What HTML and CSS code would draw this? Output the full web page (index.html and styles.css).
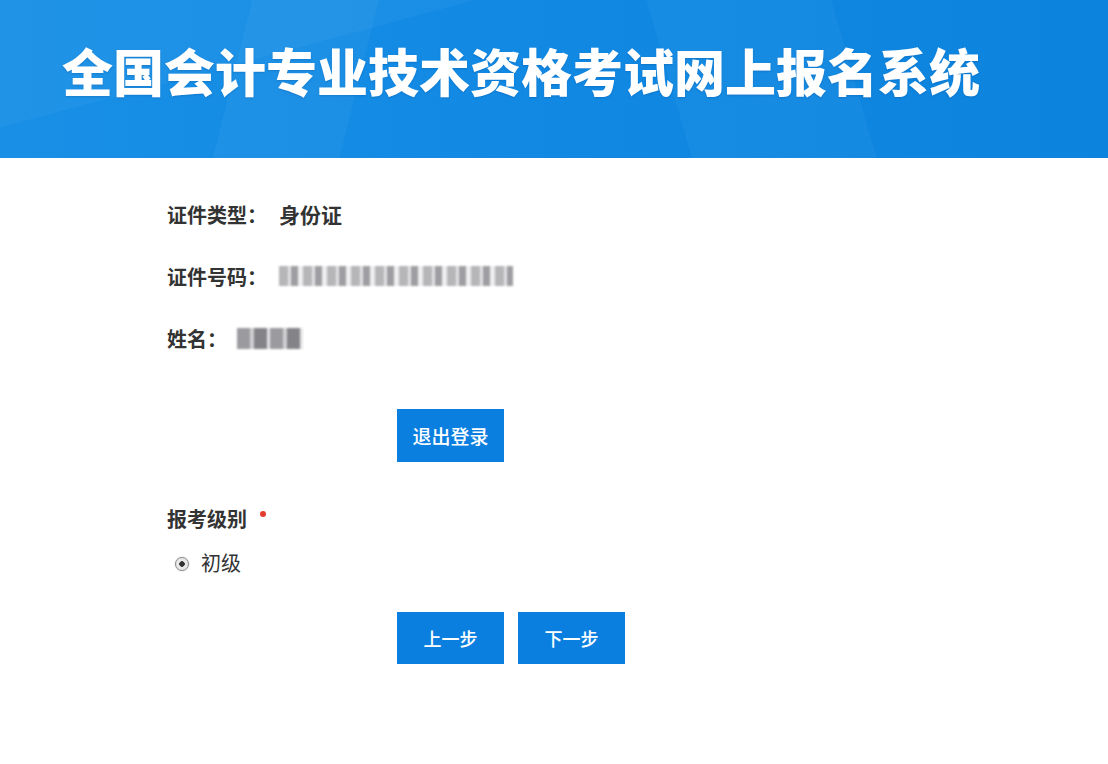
FILE: index.html
```html
<!DOCTYPE html>
<html lang="zh-CN">

<head>
    <meta charset="UTF-8">
    <meta name="viewport" content="width=device-width, initial-scale=1.0">
    <title>全国会计专业技术资格考试网上报名系统</title>
    <link rel="stylesheet" href="styles.css">
</head>

<body>
    <!-- top banner -->
    <header class="banner">
        <h1 class="banner-title">全国会计专业技术资格考试网上报名系统</h1>
    </header>

    <main class="panel">
        <div class="info-row">
            <span class="label">证件类型：</span>
            <span class="value">身份证</span>
        </div>
        <div class="info-row">
            <span class="label">证件号码：</span>
            <span class="masked masked-id"></span>
        </div>
        <div class="info-row">
            <span class="label">姓名：</span>
            <span class="masked masked-name"></span>
        </div>

        <div class="actions actions-logout">
            <button class="btn">退出登录</button>
        </div>

        <div class="field-title">报考级别<span class="required"></span></div>
        <label class="radio">
            <span class="radio-dot"></span>
            <span>初级</span>
        </label>

        <div class="actions actions-steps">
            <button class="btn">上一步</button>
            <button class="btn">下一步</button>
        </div>
    </main>
</body>

</html>
```

FILE: styles.css
```css
* {
    box-sizing: border-box;
}

body {
    margin: 0;
    background-color: #fdfdfe;
    font-family: "Noto Sans CJK SC", "Noto Sans", sans-serif;
    color: #333;
}

/* banner */
.banner {
    height: 158px;
    padding-left: 62px;
    display: flex;
    align-items: center;
    background:
        linear-gradient(104deg, transparent 0 22%, rgba(255, 255, 255, 0.035) 22% 33%, transparent 33%),
        linear-gradient(74deg, transparent 0 60%, rgba(255, 255, 255, 0.03) 60% 76%, transparent 76%),
        linear-gradient(165deg, rgba(255, 255, 255, 0.03) 0 28%, transparent 28%),
        linear-gradient(90deg, #1990e6 0%, #1189e3 50%, #0c84de 100%);
}

.banner-title {
    margin: 0 0 18px;
    font-size: 51px;
    line-height: 60px;
    font-weight: 900;
    color: #fff;
    letter-spacing: 0;
    text-shadow: 0 1px 2px rgba(0, 60, 130, 0.25);
}

/* form area */
.panel {
    padding: 44px 0 0 167px;
    background-color: #fff;
    min-height: 606px;
}

.info-row {
    display: flex;
    align-items: center;
    gap: 12px;
    height: 24px;
    margin-bottom: 38px;
    font-size: 20px;
    font-weight: 700;
    color: #333;
}

.info-row .value {
    font-size: 21px;
}

.info-row:nth-child(3) {
    margin-bottom: 0;
}

.masked {
    display: inline-block;
    height: 20px;
    filter: blur(1px);
}

.masked-id {
    width: 234px;
    background:
        repeating-linear-gradient(90deg, #a4a4a8 0 9px, #dcdcde 9px 12px, #86868b 12px 19px, #ebebed 19px 24px);
    opacity: 0.8;
}

.masked-name {
    width: 66px;
    height: 21px;
    margin-left: -2px;
    background:
        repeating-linear-gradient(90deg, #8a8a8f 0 13px, #c9c9cc 13px 17px, #6f6f74 17px 30px, #e2e2e4 30px 33px);
    opacity: 0.85;
}

.actions {
    display: flex;
    gap: 14px;
    padding-left: 230px;
}

.actions-logout {
    margin-top: 59px;
}

.actions-steps {
    margin-top: 38px;
}

.btn {
    width: 107px;
    height: 53px;
    border: none;
    background-color: #0a7fdf;
    color: #fff;
    font-family: "Noto Sans CJK SC", sans-serif;
    font-size: 19px;
    font-weight: 500;
    cursor: pointer;
}

.actions-steps .btn {
    height: 52px;
    font-size: 18px;
}

.field-title {
    margin-top: 44px;
    height: 24px;
    display: flex;
    align-items: center;
    font-size: 20px;
    font-weight: 700;
    color: #333;
}

.required {
    width: 6px;
    height: 6px;
    margin: -8px 0 0 13px;
    border-radius: 50%;
    background-color: #e53a2e;
}

.radio {
    margin: 20px 0 0 8px;
    height: 24px;
    display: flex;
    align-items: center;
    gap: 12px;
    font-size: 20px;
    color: #333;
}

.radio-dot {
    width: 14px;
    height: 14px;
    margin-top: 3px;
    border-radius: 50%;
    border: 1px solid #888;
    background: radial-gradient(circle, #333 0 2.5px, #e9e9e9 3px);
    box-shadow: 0 0 2px rgba(0, 0, 0, 0.2);
}
```
